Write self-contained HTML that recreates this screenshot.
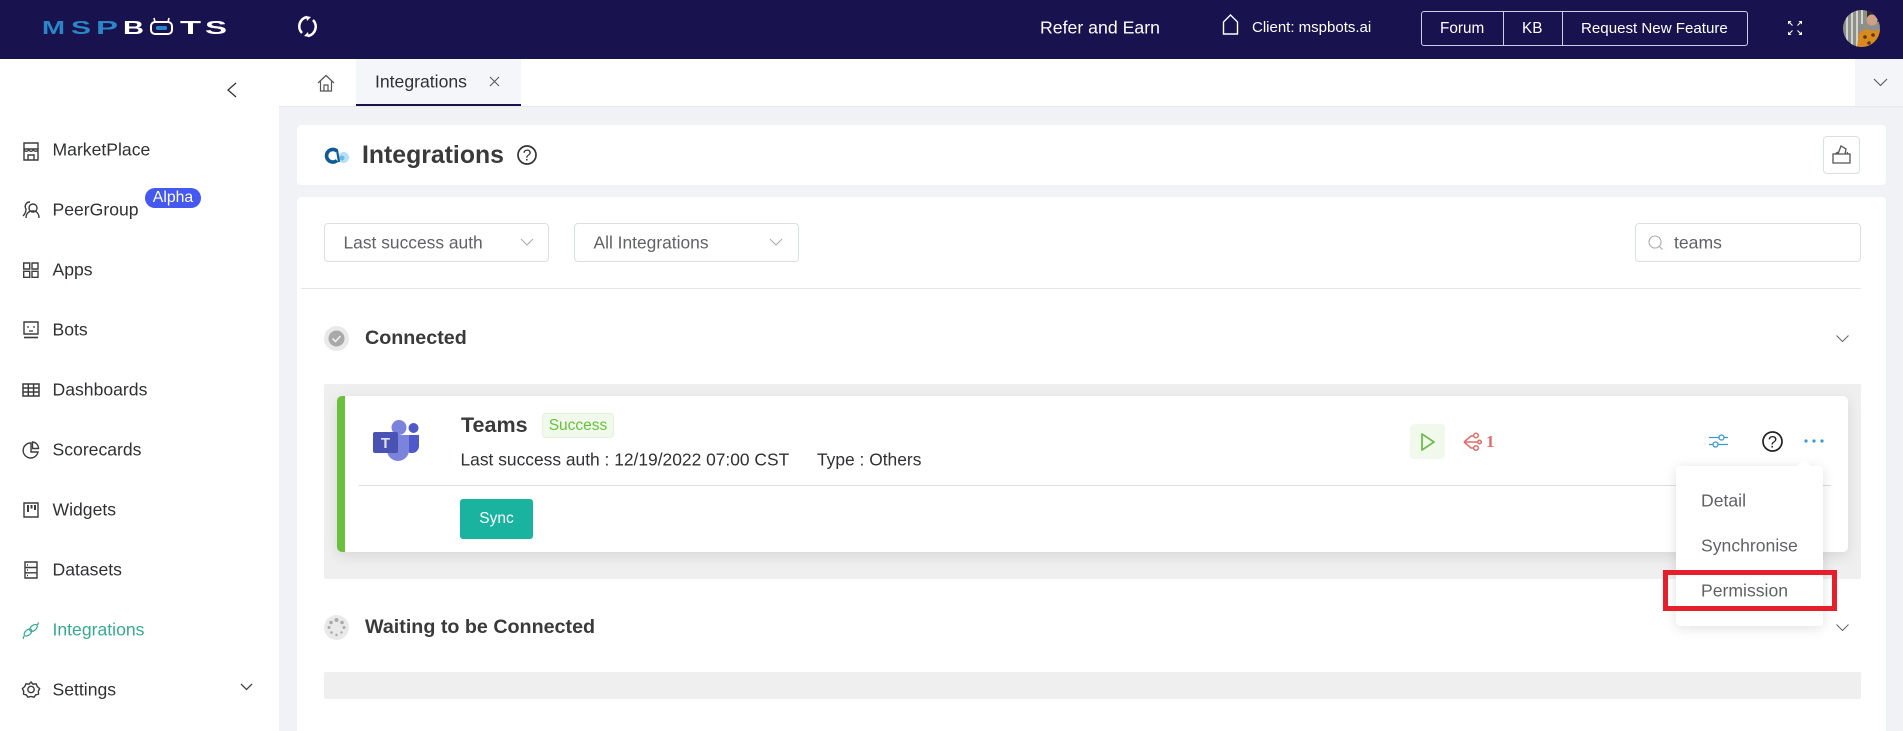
<!DOCTYPE html>
<html lang="en"><head><meta charset="utf-8"><title>Integrations</title>
<style>
html,body{margin:0;padding:0;width:1903px;height:731px;overflow:hidden;background:#f0f2f5}
body{position:relative;font-family:"Liberation Sans",Arial,sans-serif;color:#303133;font-size:17.6px}
.a{position:absolute;box-sizing:border-box}
.t{position:absolute;white-space:nowrap;transform:translateY(-50%);line-height:1.2}
svg{position:absolute;overflow:visible}
.ic{fill:none;stroke:#3c3c3c;stroke-width:1.4}
.b{font-weight:bold;color:#3a3a3a}
</style></head><body>
<!-- header -->
<div class="a" style="left:0;top:0;width:1903px;height:59px;background:#18124f"></div>
<svg style="left:0;top:0" width="340" height="59">
<g font-family="Liberation Sans,sans-serif" font-size="18" font-weight="bold" fill="#2a86c4">
<text x="42" y="34" textLength="23" lengthAdjust="spacingAndGlyphs">M</text>
<text x="71" y="34" textLength="20" lengthAdjust="spacingAndGlyphs">S</text>
<text x="96" y="34" textLength="22" lengthAdjust="spacingAndGlyphs">P</text>
<g fill="#fff"><text x="123" y="34" textLength="21" lengthAdjust="spacingAndGlyphs">B</text>
<text x="180" y="34" textLength="21" lengthAdjust="spacingAndGlyphs">T</text>
<text x="205" y="34" textLength="22" lengthAdjust="spacingAndGlyphs">S</text></g></g>
<rect x="151" y="22" width="21" height="12" rx="4" fill="none" stroke="#fff" stroke-width="2"/>
<rect x="156" y="26" width="11" height="4" rx="1.5" fill="#2a86c4"/>
<path d="M155 22l-1-4M168 22l1-4" stroke="#fff" stroke-width="1.6"/>
<path d="M302 33a9.500 9.500 0 0 1 5-16M313 20a9.500 9.500 0 0 1-5 16" fill="none" stroke="#fff" stroke-width="2.600"/>
<path d="M306 16l5 1-4 4zM309 37l-5-1 4-4z" fill="#fff"/>
</svg>
<div class="t" style="left:1040px;top:27.500px;color:#fff;font-size:17.700px">Refer and Earn</div>
<svg style="left:1220px;top:14px" width="21" height="21"><path d="M3.500 20V8L10.500 1 17.500 8v12z" fill="none" stroke="#fff" stroke-width="1.400"/></svg>
<div class="t" style="left:1252px;top:28px;color:#fff;font-size:15px">Client: mspbots.ai</div>
<div class="a" style="left:1421px;top:11px;width:327px;height:35px;border:1px solid #cfcde6;border-radius:3px"></div>
<div class="a" style="left:1503px;top:11px;width:1px;height:35px;background:#cfcde6"></div>
<div class="a" style="left:1562px;top:11px;width:1px;height:35px;background:#cfcde6"></div>
<div class="t" style="left:1440px;top:29px;color:#fff;font-size:15.300px">Forum</div>
<div class="t" style="left:1522px;top:29px;color:#fff;font-size:15.300px">KB</div>
<div class="t" style="left:1581px;top:29px;color:#fff;font-size:15.100px">Request New Feature</div>
<svg style="left:1788px;top:21px" width="14" height="14"><g fill="#fff"><path d="M0 0h3.500L0 3.500zM14 0h-3.500L14 3.500zM0 14h3.500L0 10.500zM14 14h-3.500l3.500-3.500z"/></g><path d="M1.500 1.500l3 3M12.500 1.500l-3 3M1.500 12.500l3-3M12.500 12.500l-3-3" fill="none" stroke="#fff" stroke-width="1.100"/></svg>
<svg style="left:1843px;top:10px" width="37" height="37"><defs><clipPath id="av"><circle cx="18.500" cy="18.500" r="18.500"/></clipPath></defs><g clip-path="url(#av)"><rect width="37" height="37" fill="#8f8f8a"/><path d="M4 0v37M9 0v37M14 0v37M19 0v14" stroke="#d2d2cc" stroke-width="2"/><rect x="24" width="13" height="12" fill="#2f2a26"/><circle cx="29" cy="10" r="5.500" fill="#cfa088"/><path d="M14 37l2-14 7-4 6 2 8-1v17z" fill="#d98a1e"/><circle cx="22" cy="27" r="1.800" fill="#5a3a18"/><circle cx="30" cy="25" r="1.800" fill="#5a3a18"/><circle cx="26" cy="33" r="1.800" fill="#5a3a18"/></g></svg>
<!-- sidebar -->
<div class="a" style="left:0;top:59px;width:279px;height:672px;background:#fff"></div>
<svg style="left:226px;top:82px" width="11" height="16"><path d="M10 1L2 8l8 7" fill="none" stroke="#333" stroke-width="1.300"/></svg>
<svg style="left:0;top:0" width="60" height="731" class="ic">
<path d="M24 143h14v17H24zM24 149h14M24 149a2.300 2.300 0 0 0 4.700 0a2.300 2.300 0 0 0 4.600 0a2.300 2.300 0 0 0 4.700 0M28 160v-5h6v5"/>
<circle cx="33" cy="208" r="4"/><path d="M26 218c0-5 3-7 7-7s6 3 6 7M30 202a4.500 4.500 0 0 0-4 7c0 3-1 5-3 7"/>
<path d="M23.700 263h6v6h-6zM32 263h6v6h-6zM23.700 271.300h6v6h-6zM32 271.300h6v6h-6z"/>
<path d="M24 322h14v12H24z"/><path d="M24 337.500h14" stroke-width="1.600"/><path d="M28 326v2M34 326v2M29 331h4" stroke-width="1.200"/>
<path d="M23 384h16v12H23zM23 388h16M23 392h16M28.300 384v12M33.600 384v12" stroke-width="1.500"/>
<path d="M31 443a7.500 7.500 0 1 0 7 9h-7z"/><path d="M32.500 442a6.500 6.500 0 0 1 6 6.500h-6z"/>
<path d="M24 503h14v14H24z"/><path d="M28 505v7M31.500 505v3.500M35 505v5" stroke-width="2"/>
<path d="M25 562h12v16H25zM25 567.500h12M25 572.800h12M27 565h1M27 570h1M27 575.500h1"/>
<g stroke="#36ab92" stroke-width="1.200"><ellipse cx="28" cy="632.500" rx="4.500" ry="2.600" transform="rotate(-40 28 632.500)"/><ellipse cx="33.500" cy="628" rx="4.500" ry="2.600" transform="rotate(-40 33.500 628)"/><path d="M24 636l-1 3M37.500 625l1-2.500"/></g>
<path d="M31 682.500l2 2.200 3-.4 1.300 2.800 2.300 2-1.300 2.800.2 2.700-2.800.8-1.700 2.300-3-.7-3 .7-1.700-2.300-2.800-.8.2-2.700-1.300-2.800 2.300-2 1.300-2.800 3 .4z" transform="translate(0 -.5)"/><circle cx="31" cy="689.500" r="3.200"/>
</svg>
<div class="t" style="left:52.500px;top:150px">MarketPlace</div>
<div class="t" style="left:52.500px;top:210px">PeerGroup</div>
<div class="a" style="left:145px;top:188px;width:56px;height:20px;border-radius:10px;background:#4558f0;color:#fff;font-size:15.800px;line-height:19px;text-align:center">Alpha</div>
<div class="t" style="left:52.500px;top:270px">Apps</div>
<div class="t" style="left:52.500px;top:330px">Bots</div>
<div class="t" style="left:52.500px;top:390px">Dashboards</div>
<div class="t" style="left:52.500px;top:450px">Scorecards</div>
<div class="t" style="left:52.500px;top:510px">Widgets</div>
<div class="t" style="left:52.500px;top:570px">Datasets</div>
<div class="t" style="left:52.500px;top:630px;color:#36ab92">Integrations</div>
<div class="t" style="left:52.500px;top:690px">Settings</div>
<svg style="left:240px;top:683px" width="13" height="8"><path d="M1 1l5.500 5.500L12 1" fill="none" stroke="#444" stroke-width="1.300"/></svg>
<!-- tabs -->
<div class="a" style="left:279px;top:59px;width:1624px;height:48px;background:#fff;border-bottom:1px solid #e6e8eb"></div>
<div class="a" style="left:356px;top:59px;width:165px;height:47px;background:#f5f6fa;border-bottom:2.500px solid #18124f"></div>
<svg style="left:317px;top:74px" width="18" height="18"><path d="M1 9L9 1.500 17 9M3.500 7.500V17h11V7.500M7 17v-6h4v6" fill="none" stroke="#555" stroke-width="1.200"/></svg>
<div class="t" style="left:375px;top:82px">Integrations</div>
<svg style="left:489px;top:76px" width="11" height="11"><path d="M1 1l9 9M10 1l-9 9" stroke="#555" stroke-width="1"/></svg>
<div class="a" style="left:1855px;top:59px;width:48px;height:47px;background:#f4f5f9"></div>
<svg style="left:1873px;top:78px" width="15" height="9"><path d="M1 1l6.500 6.500L14 1" fill="none" stroke="#555" stroke-width="1.100"/></svg>
<!-- title card -->
<div class="a" style="left:297px;top:125px;width:1589px;height:60px;background:#fff;border-radius:4px"></div>
<svg style="left:324px;top:146px" width="25" height="17"><circle cx="19.500" cy="11.500" r="5.500" fill="#b5e0f7"/><circle cx="18" cy="12" r="2.500" fill="#6fb7e2"/><path d="M13 14.500A6.300 6.300 0 1 1 13 5" fill="none" stroke="#0f5c95" stroke-width="3.600"/><path d="M13 4l2 12" stroke="#0f5c95" stroke-width="2.200"/></svg>
<div class="t b" style="left:362px;top:155.500px;font-size:24.800px">Integrations</div>
<svg style="left:517px;top:145px" width="20" height="20"><circle cx="10" cy="10" r="9" fill="none" stroke="#333" stroke-width="1.700"/><text x="10" y="15.500" font-size="15.500" text-anchor="middle" fill="#333" font-family="Liberation Sans,sans-serif">?</text></svg>
<div class="a" style="left:1823px;top:136px;width:37px;height:38px;border:1px solid #dcdfe6;border-radius:4px;background:#fff"></div>
<svg style="left:1832px;top:145px" width="20" height="20" fill="none" stroke="#555" stroke-width="1.300"><path d="M1 9h17v9H1zM3 9l3-2M16 9l-1-2M6 9l3-8 5 3-1 5"/></svg>
<!-- main card -->
<div class="a" style="left:297px;top:197px;width:1589px;height:534px;background:#fff;border-radius:4px 4px 0 0"></div>
<div class="a" style="left:324px;top:223px;width:225px;height:39px;border:1px solid #dcdfe6;border-radius:4px"></div>
<div class="t" style="left:343.500px;top:243px;color:#606266;font-size:17.400px">Last success auth</div>
<svg style="left:520px;top:238px" width="14" height="8"><path d="M1 1l6 6 6-6" fill="none" stroke="#aaa" stroke-width="1"/></svg>
<div class="a" style="left:574px;top:223px;width:225px;height:39px;border:1px solid #dcdfe6;border-radius:4px"></div>
<div class="t" style="left:593.500px;top:243px;color:#606266;font-size:17.400px">All Integrations</div>
<svg style="left:769px;top:238px" width="14" height="8"><path d="M1 1l6 6 6-6" fill="none" stroke="#aaa" stroke-width="1"/></svg>
<div class="a" style="left:1635px;top:223px;width:226px;height:39px;border:1px solid #dcdfe6;border-radius:4px"></div>
<svg style="left:1648px;top:235px" width="15" height="15" fill="none" stroke="#aaa" stroke-width="1.100"><circle cx="7" cy="7" r="6"/><path d="M11.500 11.500l3 3"/></svg>
<div class="t" style="left:1674px;top:243px;color:#606266">teams</div>
<div class="a" style="left:301px;top:288px;width:1560px;height:1px;background:#e6e6e6"></div>
<!-- connected -->
<svg style="left:324px;top:326px" width="25" height="25"><circle cx="12.500" cy="12.500" r="12.500" fill="#e9e9e9"/><circle cx="12.500" cy="12.500" r="8" fill="#a9a9a9"/><path d="M8.500 12.500l3 3 5-5.500" fill="none" stroke="#eee" stroke-width="1.600"/></svg>
<div class="t b" style="left:365px;top:339px;font-size:19.700px">Connected</div>
<svg style="left:1836px;top:335px" width="13" height="8"><path d="M.5.500l6 6 6-6" fill="none" stroke="#666" stroke-width="1"/></svg>
<div class="a" style="left:324px;top:384px;width:1537px;height:195px;background:#efefef;border-radius:2px"></div>
<div class="a" style="left:337px;top:396px;width:1511px;height:156px;background:#fff;border-left:8px solid #6abf3c;border-radius:5px;box-shadow:0 4px 14px rgba(0,0,0,.1)"></div>
<svg style="left:373px;top:420px" width="47" height="42">
<circle cx="40.500" cy="8" r="5" fill="#5059c9"/><path d="M33 15h13v11a7 7 0 0 1-8 7c-3 0-5-2-5-5z" fill="#5059c9"/>
<circle cx="26" cy="7.500" r="7.500" fill="#7b83db"/><path d="M14 15h22v15a11 11 0 0 1-22 0z" fill="#7b83db"/>
<rect x="0" y="12" width="25" height="21" rx="2" fill="#4a52b4"/>
<text x="12.500" y="28" font-family="Liberation Sans,sans-serif" font-size="15" font-weight="bold" fill="#dfe1f5" text-anchor="middle">T</text></svg>
<div class="t b" style="left:461px;top:426px;font-size:21.500px">Teams</div>
<div class="a" style="left:542px;top:413px;width:72px;height:25px;background:#f0f9eb;border:1px solid #e1f3d8;border-radius:4px;color:#67c23a;font-size:15.500px;line-height:23px;text-align:center">Success</div>
<div class="t" style="left:460.500px;top:460px;font-size:17.400px">Last success auth : 12/19/2022 07:00 CST</div>
<div class="t" style="left:817px;top:460px;font-size:17.400px">Type : Others</div>
<div class="a" style="left:359px;top:485px;width:1472px;height:1px;background:#dedede"></div>
<div class="a" style="left:460px;top:499px;width:73px;height:40px;background:#19b3a0;border-radius:3px;color:#fff;font-size:15.500px;line-height:40px;text-align:center">Sync</div>
<div class="a" style="left:1410px;top:424px;width:35px;height:35px;background:#f0f9eb;border-radius:4px"></div>
<svg style="left:1420px;top:432px" width="16" height="20"><path d="M2 2l12 8-12 8z" fill="none" stroke="#72bd52" stroke-width="1.800" stroke-linejoin="round"/></svg>
<svg style="left:1463px;top:432px" width="19" height="19" fill="none" stroke="#e06b6b" stroke-width="1.500"><path d="M1 10l7-6h3M1 10l7 6h3M1 10h14"/><circle cx="13" cy="3.500" r="2.300"/><circle cx="16.500" cy="10" r="1.800"/><circle cx="13" cy="16" r="2.300"/></svg>
<div class="t" style="left:1486px;top:442px;color:#e06b6b;font-family:'Liberation Serif',serif;font-weight:bold;font-size:17px">1</div>
<svg style="left:1709px;top:434px" width="20" height="15" fill="none" stroke="#3a9bd1" stroke-width="1.300"><path d="M0 3.500h10M15 3.500h4M0 10.500h4M9 10.500h10"/><circle cx="12.500" cy="3.500" r="2.500"/><circle cx="6.500" cy="10.500" r="2.500"/></svg>
<svg style="left:1762px;top:431px" width="21" height="21"><circle cx="10.500" cy="10.500" r="9.500" fill="none" stroke="#222" stroke-width="1.700"/><text x="10.500" y="16.500" font-size="16.500" text-anchor="middle" fill="#222" font-family="Liberation Sans,sans-serif">?</text></svg>
<svg style="left:1804px;top:439px" width="20" height="4" fill="#3a9bd1"><circle cx="2" cy="2" r="1.600"/><circle cx="10" cy="2" r="1.600"/><circle cx="18" cy="2" r="1.600"/></svg>
<!-- waiting -->
<svg style="left:324px;top:615px" width="25" height="25"><circle cx="12.500" cy="12.500" r="12.500" fill="#e9e9e9"/><g fill="#aaa"><circle cx="12.500" cy="5" r="2"/><circle cx="18" cy="7.500" r="1.800"/><circle cx="20" cy="12.500" r="1.500"/><circle cx="17.500" cy="17.500" r="1.200"/><circle cx="12.500" cy="20" r="1.200"/><circle cx="7.500" cy="17.500" r="1.300"/><circle cx="5" cy="12.500" r="1.500"/><circle cx="7" cy="7.500" r="1.800"/></g></svg>
<div class="t b" style="left:365px;top:628px;font-size:19.700px">Waiting to be Connected</div>
<svg style="left:1836px;top:624px" width="13" height="8"><path d="M.5.500l6 6 6-6" fill="none" stroke="#666" stroke-width="1"/></svg>
<div class="a" style="left:324px;top:672px;width:1537px;height:27px;background:#efefef;border-radius:2px"></div>
<!-- dropdown -->
<div class="a" style="left:1676px;top:466px;width:147px;height:160px;background:#fff;border-radius:4px;box-shadow:0 2px 12px rgba(0,0,0,.12)"></div>
<div class="a" style="left:1799px;top:461px;width:10px;height:10px;background:#fff;transform:rotate(45deg)"></div>
<div class="t" style="left:1701px;top:501px;color:#606266">Detail</div>
<div class="t" style="left:1701px;top:546px;color:#606266">Synchronise</div>
<div class="t" style="left:1701px;top:591px;color:#606266">Permission</div>
<div class="a" style="left:1663px;top:570px;width:174px;height:41px;border:5px solid #e61f2d"></div>
</body></html>
